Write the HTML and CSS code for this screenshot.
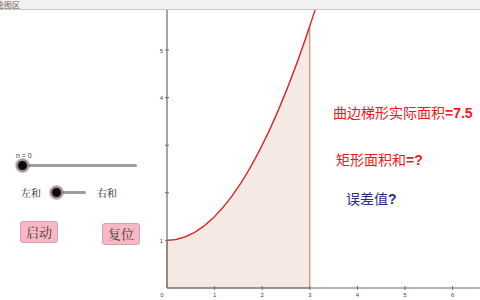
FILE: index.html
```html
<!DOCTYPE html>
<html>
<head>
<meta charset="utf-8">
<link rel="stylesheet" href="styles.css">
</head>
<body>
<div class="titlebar"><span class="title">绘图区</span></div>
<div class="main">
  <div class="panel">
    <div class="slider-label">n = 0</div>
    <div class="slider long"><span class="knob"></span></div>
    <div class="toggle-row">
      <span class="lab">左和</span>
      <div class="slider short"><span class="knob"></span></div>
      <span class="lab">右和</span>
    </div>
    <div class="buttons">
      <button class="btn">启动</button>
      <button class="btn second">复位</button>
    </div>
  </div>
  <svg class="graph" viewBox="0 10 480 290" width="480" height="290">
    <path d="M167,288 L167,240.4 Q238.4,240.4 309.8,26.2 L309.8,288 Z" fill="#f5e9e4" stroke="#c8785c" stroke-width="1"/>
    <line x1="167" y1="10" x2="167" y2="288" stroke="#6a6a6a" stroke-width="1.2"/>
    <line x1="167" y1="288" x2="480" y2="288" stroke="#6a6a6a" stroke-width="1.2"/>
    <path d="M167,240.4 Q241.3,240.4 315.5,8.7" fill="none" stroke="#e0282a" stroke-width="1.4"/>
    <g stroke="#6a6a6a" stroke-width="1">
      <line x1="214.6" y1="286" x2="214.6" y2="290"/>
      <line x1="262.2" y1="286" x2="262.2" y2="290"/>
      <line x1="309.8" y1="286" x2="309.8" y2="290"/>
      <line x1="357.4" y1="286" x2="357.4" y2="290"/>
      <line x1="405" y1="286" x2="405" y2="290"/>
      <line x1="452.6" y1="286" x2="452.6" y2="290"/>
      <line x1="165" y1="240.4" x2="169" y2="240.4"/>
      <line x1="165" y1="192.8" x2="169" y2="192.8"/>
      <line x1="165" y1="145.2" x2="169" y2="145.2"/>
      <line x1="165" y1="97.6" x2="169" y2="97.6"/>
      <line x1="165" y1="50" x2="169" y2="50"/>
    </g>
    <g class="ticklab" text-anchor="middle">
      <text x="162" y="297">0</text>
      <text x="214.6" y="297">1</text>
      <text x="262.2" y="297">2</text>
      <text x="309.8" y="297">3</text>
      <text x="357.4" y="297">4</text>
      <text x="405" y="297">5</text>
      <text x="452.6" y="297">6</text>
    </g>
    <g class="ticklab" text-anchor="end">
      <text x="163" y="242.5">1</text>
      <text x="163" y="100">4</text>
      <text x="163" y="52.5">5</text>
    </g>
  </svg>
  <div class="note red n1">曲边梯形实际面积<b>=7.5</b></div>
  <div class="note red n2">矩形面积和<b>=?</b></div>
  <div class="note navy n3">误差值<b>?</b></div>
</div>
</body>
</html>
```
FILE: styles.css
```css
html, body {
  margin: 0;
  padding: 0;
  background: #fff;
  width: 480px;
  height: 300px;
  overflow: hidden;
  font-family: "Noto Sans CJK SC", "Liberation Sans", sans-serif;
}
.titlebar {
  height: 9px;
  background: #f1f1f1;
  border-bottom: 1px solid #c8c8c8;
  overflow: hidden;
}
.title {
  display: block;
  font-size: 8px;
  line-height: 9px;
  color: #7a5a50;
  margin-left: -4px;
}
.main {
  position: relative;
  height: 290px;
}
.panel {
  position: relative;
  z-index: 2;
  width: 160px;
  padding-top: 142px;
  display: flex;
  flex-direction: column;
}
.slider-label {
  font-family: "Liberation Sans", sans-serif;
  font-size: 7px;
  line-height: 8px;
  color: #333;
  margin-left: 16px;
}
.slider {
  position: relative;
  height: 3px;
  background: #9c9c9c;
  border-radius: 2px;
}
.slider.long {
  width: 115px;
  margin: 4px 0 0 22px;
}
.slider.short {
  width: 30px;
  margin-left: 15px;
  margin-right: 11px;
}
.knob {
  position: absolute;
  left: -6px;
  top: -5px;
  width: 9px;
  height: 9px;
  border-radius: 50%;
  background: #0a0a1a;
  border: 2px solid #a08888;
  box-shadow: 0 0 0 1px rgba(120,100,100,0.35);
}
.toggle-row {
  display: flex;
  align-items: center;
  margin: 18px 0 0 21px;
}
.lab {
  font-family: "Noto Serif CJK SC", "Noto Sans CJK SC", serif;
  font-size: 10px;
  color: #222;
}
.buttons {
  display: flex;
  align-items: flex-start;
  margin: 21px 0 0 20px;
  gap: 44px;
}
.btn {
  width: 38px;
  height: 22px;
  padding: 0;
  background: #f7b8c4;
  border: 1px solid #d7a0aa;
  border-radius: 3px;
  font-family: "Noto Serif CJK SC", "Noto Sans CJK SC", serif;
  font-size: 13px;
  line-height: 20px;
  color: #3a3a3a;
}
.btn.second {
  margin-top: 2px;
}
.graph {
  position: absolute;
  left: 0;
  top: 0;
  z-index: 1;
}
.ticklab {
  font-family: "Liberation Sans", sans-serif;
  font-size: 6px;
  fill: #444;
}
.note {
  position: absolute;
  z-index: 2;
  font-size: 14px;
  line-height: 16px;
  white-space: nowrap;
}
.note b {
  font-family: "Liberation Sans", sans-serif;
  font-weight: bold;
}
.red { color: #f01818; }
.navy { color: #2a2a8c; }
.n1 { left: 333px; top: 94px; }
.n2 { left: 336px; top: 141px; }
.n3 { left: 346px; top: 180px; }
```
